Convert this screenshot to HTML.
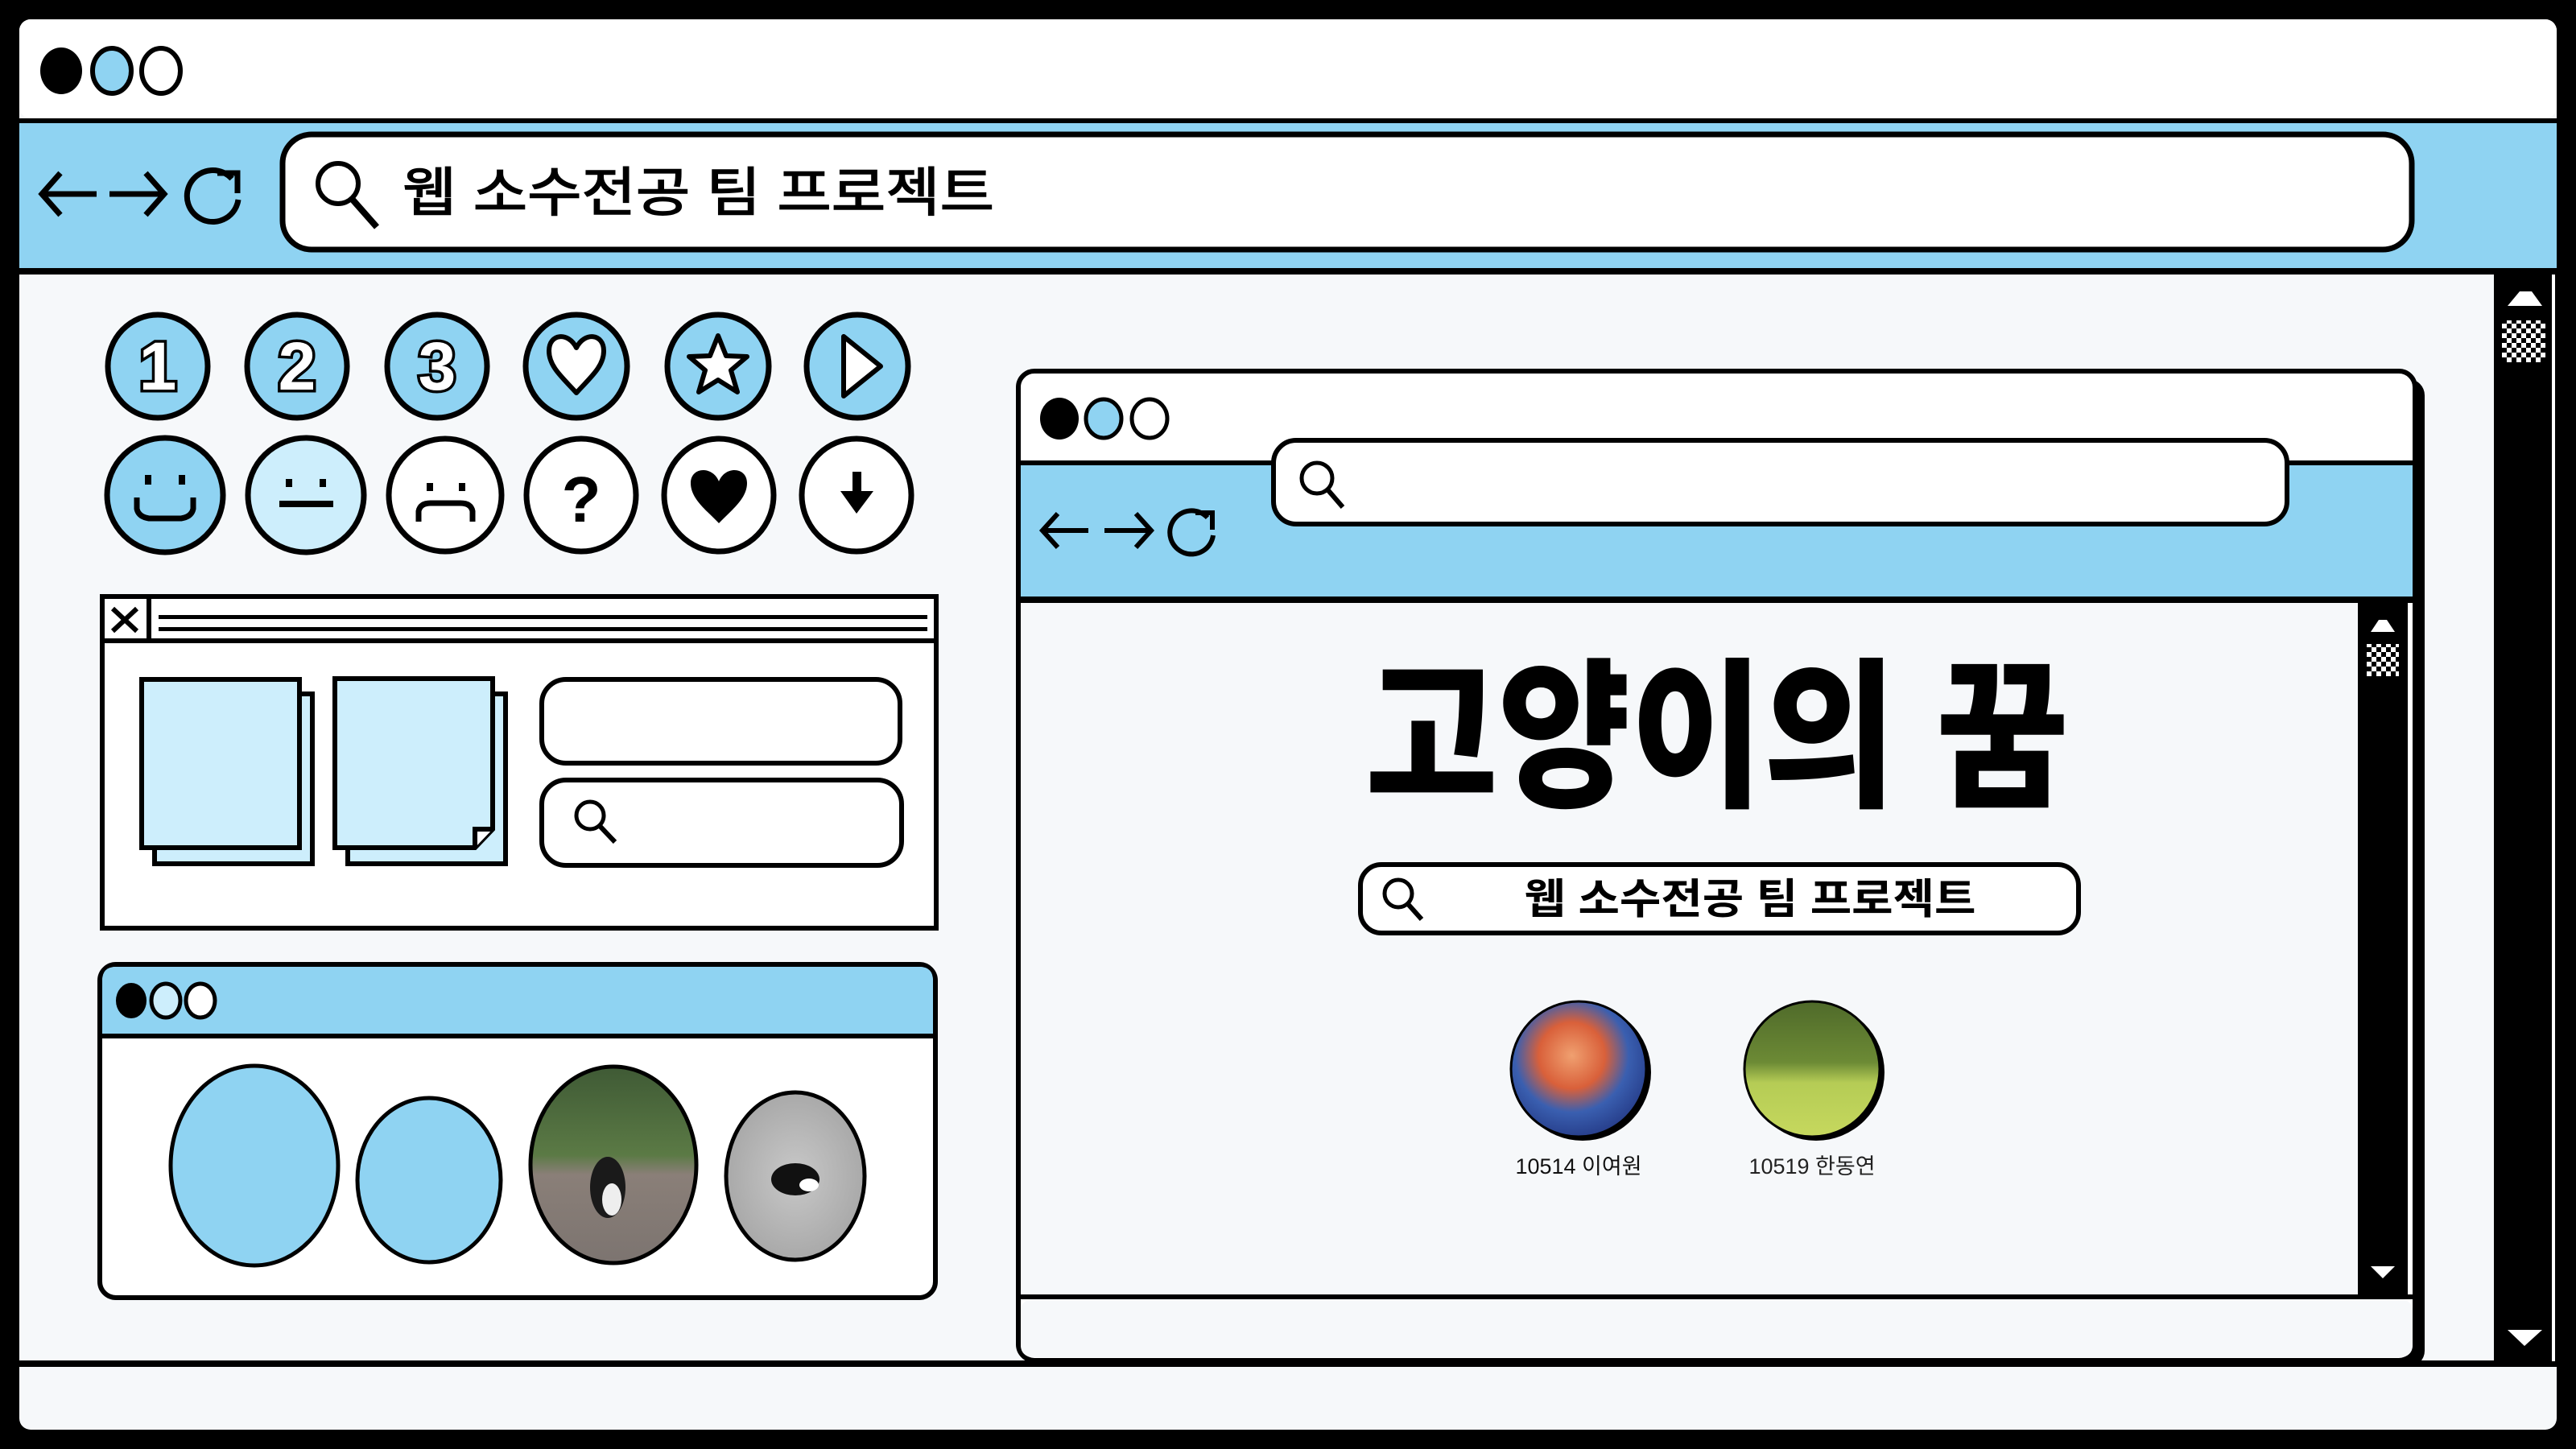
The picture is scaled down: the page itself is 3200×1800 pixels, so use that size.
<!DOCTYPE html>
<html><head><meta charset="utf-8"><style>
html,body{margin:0;padding:0;background:#000;}
svg{display:block}
text{font-family:"Liberation Sans","Noto Sans CJK KR",sans-serif}
</style></head><body>
<svg width="3200" height="1800" viewBox="0 0 3200 1800" xmlns="http://www.w3.org/2000/svg">
<defs>
<pattern id="chk" width="12" height="12" patternUnits="userSpaceOnUse"><rect width="12" height="12" fill="#fff"/><rect width="6" height="6" fill="#000"/><rect x="6" y="6" width="6" height="6" fill="#000"/></pattern>
<radialGradient id="av1" cx="0.45" cy="0.4" r="0.7"><stop offset="0" stop-color="#f0a070"/><stop offset="0.35" stop-color="#d9603a"/><stop offset="0.6" stop-color="#3a5fb0"/><stop offset="1" stop-color="#1e2f7a"/></radialGradient>
<linearGradient id="av2" x1="0" y1="0" x2="0" y2="1"><stop offset="0" stop-color="#4f6a2a"/><stop offset="0.45" stop-color="#6c8a35"/><stop offset="0.6" stop-color="#b5cc55"/><stop offset="1" stop-color="#c6d85e"/></linearGradient>
<linearGradient id="cat1" x1="0" y1="0" x2="0" y2="1"><stop offset="0" stop-color="#3f5a35"/><stop offset="0.45" stop-color="#5b7a45"/><stop offset="0.55" stop-color="#8a7f78"/><stop offset="1" stop-color="#7c7470"/></linearGradient>
<radialGradient id="cat2"><stop offset="0" stop-color="#c8c8c8"/><stop offset="1" stop-color="#a9a9a9"/></radialGradient>
</defs>

<rect x="24" y="24" width="3152" height="1752" rx="14" fill="#f6f8fa"/>
<rect x="24" y="24" width="3152" height="123" rx="14" fill="#fff"/>
<rect x="24" y="147" width="3152" height="6" fill="#000"/>
<rect x="24" y="153" width="3152" height="180" fill="#8fd3f2"/>
<rect x="24" y="333" width="3152" height="8" fill="#000"/>
<rect x="24" y="1690" width="3152" height="8" fill="#000"/>
<rect x="3098" y="341" width="78" height="1357" fill="#000"/>
<rect x="3170" y="341" width="4" height="1350" fill="#fff"/>
<polygon points="3115,380 3130,362 3145,362 3158,380" fill="#fff"/>
<rect x="3108" y="398" width="54" height="52" fill="url(#chk)"/>
<polygon points="3115,1652 3158,1652 3136,1672" fill="#fff"/>

<ellipse cx="76" cy="88" rx="26" ry="29" fill="#000"/>
<ellipse cx="139" cy="88" rx="24" ry="28" fill="#8fd3f2" stroke="#000" stroke-width="6"/>
<ellipse cx="200" cy="88" rx="24" ry="28" fill="#fff" stroke="#000" stroke-width="6"/>

<g stroke="#000" stroke-width="7" fill="none">
<path d="M52 241H120M75 215L52 241L75 267"/>
<path d="M136 241H204M181 215L204 241L181 267"/>
<path d="M288 222A32 32 0 1 0 296 248M270 215H295V240"/>
</g>

<rect x="351" y="167" width="2645" height="143" rx="36" fill="#fff" stroke="#000" stroke-width="7"/>
<circle cx="420" cy="228" r="25" fill="none" stroke="#000" stroke-width="6"/>
<path d="M438 248L468 282" stroke="#000" stroke-width="8"/>
<text x="500" y="262" font-size="66" font-weight="400" textLength="735" lengthAdjust="spacingAndGlyphs" stroke="#000" stroke-width="1.5">웹 소수전공 팀 프로젝트</text>

<g stroke="#000" stroke-width="7" fill="#8fd3f2">
<ellipse cx="196" cy="455" rx="62" ry="64"/>
<ellipse cx="369" cy="455" rx="62" ry="64"/>
<ellipse cx="543" cy="455" rx="62" ry="64"/>
<ellipse cx="716" cy="455" rx="63" ry="64"/>
<ellipse cx="892" cy="455" rx="63" ry="64"/>
<ellipse cx="1065" cy="455" rx="63" ry="64"/>
</g>
<g font-size="84" font-weight="900" fill="#fff" stroke="#000" stroke-width="7" paint-order="stroke" text-anchor="middle">
<text x="196" y="484">1</text><text x="369" y="484">2</text><text x="543" y="484">3</text>
</g>
<g fill="#fff" stroke="#000" stroke-width="6" stroke-linejoin="round">
<path d="M716 432C706 412 682 414 682 436C682 456 700 470 716 488C732 470 750 456 750 436C750 414 726 412 716 432Z"/>
<polygon points="892,417 902,442 928,443 908,460 916,487 892,472 868,487 876,460 856,443 882,442"/>
<polygon points="1048,418 1048,492 1094,455"/>
</g>

<g stroke="#000" stroke-width="7">
<ellipse cx="205" cy="615" rx="72" ry="71" fill="#8fd3f2"/>
<ellipse cx="380" cy="615" rx="72" ry="71" fill="#cdeefc"/>
<ellipse cx="553" cy="615" rx="70" ry="70" fill="#fff"/>
<ellipse cx="722" cy="615" rx="68" ry="70" fill="#fff"/>
<ellipse cx="893" cy="615" rx="68" ry="70" fill="#fff"/>
<ellipse cx="1064" cy="615" rx="68" ry="70" fill="#fff"/>
</g>
<g fill="#000">
<rect x="180" y="590" width="8" height="12"/><rect x="222" y="590" width="8" height="12"/>
<path d="M170 618V632Q172 642 185 644H225Q238 642 240 632V618" fill="none" stroke="#000" stroke-width="7"/>
<rect x="355" y="595" width="8" height="10"/><rect x="397" y="595" width="8" height="10"/>
<rect x="347" y="622" width="67" height="8"/>
<rect x="530" y="600" width="8" height="10"/><rect x="570" y="600" width="8" height="10"/>
<path d="M520 648V635Q522 625 535 625H572Q585 625 587 635V648" fill="none" stroke="#000" stroke-width="7"/>
<text x="722" y="648" font-size="80" font-weight="900" text-anchor="middle">?</text>
<path d="M893 598C885 578 858 580 858 600C858 620 878 634 893 650C908 634 928 620 928 600C928 580 901 578 893 598Z"/>
<rect x="1059" y="586" width="11" height="30"/><polygon points="1044,610 1085,610 1064,638"/>
</g>

<rect x="127" y="741" width="1036" height="412" fill="#fff" stroke="#000" stroke-width="6"/>
<rect x="127" y="793" width="1036" height="6" fill="#000"/>
<rect x="182" y="741" width="6" height="54" fill="#000"/>
<path d="M140 756L170 784M170 756L140 784" stroke="#000" stroke-width="6"/>
<rect x="197" y="764" width="955" height="5" fill="#000"/>
<rect x="197" y="779" width="955" height="5" fill="#000"/>
<g fill="#cdeefc" stroke="#000" stroke-width="6">
<rect x="192" y="862" width="196" height="211"/>
<rect x="176" y="844" width="196" height="209"/>
<rect x="432" y="862" width="196" height="211"/>
<path d="M416 843H612V1030L590 1053H416Z"/>
<path d="M590 1053V1030H612" fill="#fff"/>
</g>
<rect x="673" y="844" width="445" height="104" rx="30" fill="#fff" stroke="#000" stroke-width="6"/>
<rect x="673" y="969" width="447" height="106" rx="30" fill="#fff" stroke="#000" stroke-width="6"/>
<circle cx="733" cy="1013" r="17" fill="none" stroke="#000" stroke-width="5"/>
<path d="M745 1026L764 1046" stroke="#000" stroke-width="6"/>

<rect x="124" y="1198" width="1038" height="414" rx="20" fill="#fff" stroke="#000" stroke-width="6"/>
<path d="M127 1286V1218Q127 1201 144 1201H1142Q1159 1201 1159 1218V1286Z" fill="#8fd3f2"/>
<rect x="124" y="1284" width="1038" height="6" fill="#000"/>
<ellipse cx="163" cy="1243" rx="19" ry="22" fill="#000"/>
<ellipse cx="206" cy="1243" rx="18" ry="21" fill="#cdeefc" stroke="#000" stroke-width="5"/>
<ellipse cx="249" cy="1243" rx="18" ry="21" fill="#fff" stroke="#000" stroke-width="5"/>
<g stroke="#000" stroke-width="5">
<ellipse cx="316" cy="1448" rx="104" ry="124" fill="#8fd3f2"/>
<ellipse cx="533" cy="1466" rx="89" ry="102" fill="#8fd3f2"/>
<ellipse cx="762" cy="1447" rx="103" ry="122" fill="url(#cat1)"/>
<ellipse cx="988" cy="1461" rx="86" ry="104" fill="url(#cat2)"/>
</g>
<ellipse cx="755" cy="1475" rx="22" ry="38" fill="#1a1a1a"/>
<ellipse cx="760" cy="1490" rx="12" ry="20" fill="#eee"/>
<ellipse cx="988" cy="1465" rx="30" ry="20" fill="#111"/>
<ellipse cx="1005" cy="1472" rx="12" ry="8" fill="#fff"/>

<rect x="1275" y="471" width="1737" height="1227" rx="20" fill="#000"/>
<rect x="1265" y="461" width="1735" height="1229" rx="20" fill="#fff" stroke="#000" stroke-width="6"/>
<rect x="1268" y="575" width="1729" height="166" fill="#8fd3f2"/>
<rect x="1265" y="572" width="1735" height="6" fill="#000"/>
<rect x="1265" y="741" width="1735" height="8" fill="#000"/>
<rect x="1268" y="749" width="1661" height="859" fill="#f6f8fa"/>
<rect x="1265" y="1608" width="1735" height="6" fill="#000"/>
<rect x="1268" y="1614" width="1729" height="72" rx="14" fill="#f6f8fa"/>
<rect x="2929" y="749" width="62" height="861" fill="#000"/>
<polygon points="2945,785 2955,770 2965,770 2975,785" fill="#fff"/>
<rect x="2940" y="800" width="40" height="40" fill="url(#chk)"/>
<polygon points="2945,1573 2975,1573 2960,1588" fill="#fff"/>
<ellipse cx="1316" cy="520" rx="24" ry="26" fill="#000"/>
<ellipse cx="1371" cy="520" rx="22" ry="24" fill="#8fd3f2" stroke="#000" stroke-width="5"/>
<ellipse cx="1428" cy="520" rx="22" ry="24" fill="#fff" stroke="#000" stroke-width="5"/>
<rect x="1582" y="547" width="1259" height="104" rx="28" fill="#fff" stroke="#000" stroke-width="6"/>
<circle cx="1636" cy="594" r="19" fill="none" stroke="#000" stroke-width="5"/>
<path d="M1649 608L1668 630" stroke="#000" stroke-width="6"/>
<g stroke="#000" stroke-width="6" fill="none">
<path d="M1295 659H1352M1314 638L1295 659L1314 680"/>
<path d="M1372 659H1430M1411 638L1430 659L1411 680"/>
<path d="M1500 643A27 27 0 1 0 1507 665M1485 637H1506V658"/>
</g>
<text x="2133" y="986" font-size="200" font-weight="900" text-anchor="middle" textLength="874" lengthAdjust="spacingAndGlyphs">고양이의 꿈</text>
<rect x="1690" y="1074" width="892" height="85" rx="26" fill="#fff" stroke="#000" stroke-width="6"/>
<circle cx="1737" cy="1110" r="17" fill="none" stroke="#000" stroke-width="5"/>
<path d="M1749 1123L1766 1142" stroke="#000" stroke-width="6"/>
<text x="2174" y="1135" font-size="52" font-weight="700" text-anchor="middle" textLength="561" lengthAdjust="spacingAndGlyphs">웹 소수전공 팀 프로젝트</text>
<circle cx="1966" cy="1332" r="85" fill="#000"/>
<circle cx="1961" cy="1328" r="84" fill="url(#av1)" stroke="#000" stroke-width="3"/>
<circle cx="2256" cy="1332" r="85" fill="#000"/>
<circle cx="2251" cy="1328" r="84" fill="url(#av2)" stroke="#000" stroke-width="3"/>
<text x="1961" y="1458" font-size="27" text-anchor="middle" fill="#111">10514 이여원</text>
<text x="2251" y="1458" font-size="27" text-anchor="middle" fill="#222">10519 한동연</text>
</svg>
</body></html>
